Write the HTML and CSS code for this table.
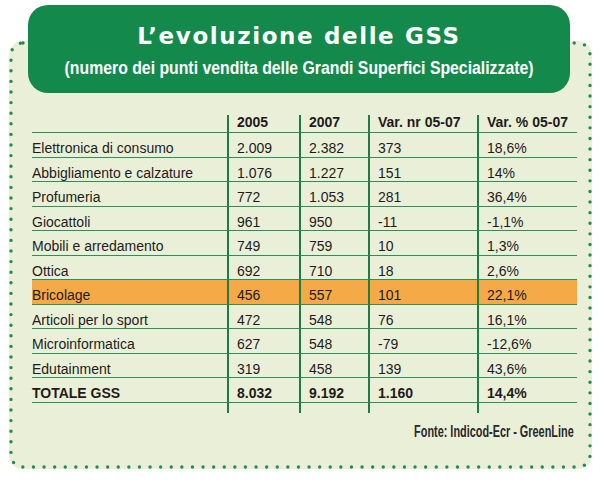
FILE: index.html
```html
<!DOCTYPE html>
<html lang="it">
<head>
<meta charset="utf-8">
<title>L’evoluzione delle GSS</title>
<link rel="stylesheet" href="styles.css">
</head>
<body>
<section class="panel">
  <svg class="dots" width="583" height="428" viewBox="0 0 583 428" aria-hidden="true">
    <rect x="2" y="2" width="579" height="424" rx="12" ry="12" fill="none" stroke="#238a52" stroke-width="3.4" stroke-linecap="round" stroke-dasharray="0 10.6"/>
  </svg>
  <header class="banner">
    <h1 class="title">L’evoluzione delle GSS</h1>
    <p class="subtitle"><span class="narrow">(numero dei punti vendita delle Grandi Superfici Specializzate)</span></p>
  </header>
  <table class="data">
    <colgroup>
      <col class="c-label"><col class="c-2005"><col class="c-2007"><col class="c-varnr"><col class="c-varpc">
    </colgroup>
    <thead>
      <tr><th></th><th>2005</th><th>2007</th><th>Var. nr 05-07</th><th>Var. % 05-07</th></tr>
    </thead>
    <tbody>
      <tr><td>Elettronica di consumo</td><td>2.009</td><td>2.382</td><td>373</td><td>18,6%</td></tr>
      <tr><td>Abbigliamento e calzature</td><td>1.076</td><td>1.227</td><td>151</td><td>14%</td></tr>
      <tr><td>Profumeria</td><td>772</td><td>1.053</td><td>281</td><td>36,4%</td></tr>
      <tr><td>Giocattoli</td><td>961</td><td>950</td><td>-11</td><td>-1,1%</td></tr>
      <tr><td>Mobili e arredamento</td><td>749</td><td>759</td><td>10</td><td>1,3%</td></tr>
      <tr><td>Ottica</td><td>692</td><td>710</td><td>18</td><td>2,6%</td></tr>
      <tr class="highlight"><td>Bricolage</td><td>456</td><td>557</td><td>101</td><td>22,1%</td></tr>
      <tr><td>Articoli per lo sport</td><td>472</td><td>548</td><td>76</td><td>16,1%</td></tr>
      <tr><td>Microinformatica</td><td>627</td><td>548</td><td>-79</td><td>-12,6%</td></tr>
      <tr><td>Edutainment</td><td>319</td><td>458</td><td>139</td><td>43,6%</td></tr>
      <tr class="total"><td>TOTALE GSS</td><td>8.032</td><td>9.192</td><td>1.160</td><td>14,4%</td></tr>
      <tr class="tail"><td></td><td></td><td></td><td></td><td></td></tr>
    </tbody>
  </table>
  <p class="source"><span class="source-text">Fonte: Indicod-Ecr - GreenLine</span></p>
</section>
</body>
</html>
```

FILE: styles.css
```css
html, body {
  margin: 0;
  padding: 0;
  background: #ffffff;
}

.panel {
  position: relative;
  display: flow-root;
  box-sizing: border-box;
  width: 583px;
  height: 428px;
  margin: 41px 0 0 9px;
  background: #eaf0d8;
  border-radius: 14px;
  font-family: "Liberation Sans", Arial, sans-serif;
  color: #1e1b1c;
}

.dots {
  position: absolute;
  left: 0;
  top: 0;
  overflow: visible;
}

.banner {
  position: relative;
  box-sizing: border-box;
  height: 88px;
  margin: -36px 22px 0 19px;
  padding-top: 18px;
  background: #13894b;
  border-radius: 20px;
  color: #ffffff;
  text-align: center;
}

.title {
  margin: 0;
  font-family: "DejaVu Sans", sans-serif;
  font-weight: bold;
  font-size: 23px;
  line-height: 26px;
  letter-spacing: 1.6px;
}

.subtitle {
  margin: 8px 0 0;
  font-family: "Liberation Sans", Arial, sans-serif;
  font-weight: bold;
  font-size: 18px;
  line-height: 22px;
  white-space: nowrap;
}

.narrow {
  display: inline-block;
  transform: scaleX(0.878);
  transform-origin: center;
}

.data {
  table-layout: fixed;
  width: 545px;
  margin: 22px 0 0 23px;
  border-collapse: separate;
  border-spacing: 0;
  font-size: 14px;
}

.c-label { width: 195px; }
.c-2005 { width: 72px; }
.c-2007 { width: 69px; }
.c-varnr { width: 109px; }
.c-varpc { width: 100px; }

.data th,
.data td {
  padding: 0 0 0 10px;
  text-align: left;
  white-space: nowrap;
  border-bottom: 1px solid #2f9057;
}

.data th:first-child,
.data td:first-child {
  padding-left: 0;
}

.data th + th,
.data td + td {
  border-left: 2px solid #1c7d45;
  padding-left: 8px;
}

.data th {
  font-weight: bold;
  line-height: 15px;
  padding-bottom: 2px;
}

.data td {
  padding-top: 7px;
  line-height: 16.5px;
  font-weight: normal;
}

.data .highlight td {
  background: #f5a947;
}

.data .total td {
  font-weight: bold;
}

.data .tail td {
  height: 10px;
  padding: 0;
  line-height: 10px;
  border-bottom: none;
}

.source {
  margin: 10px 18px 0 0;
  text-align: right;
  font-size: 16px;
  line-height: 18px;
  font-weight: bold;
  color: #2a2727;
}

.source-text {
  display: inline-block;
  transform: scaleX(0.68);
  transform-origin: right center;
}
```
